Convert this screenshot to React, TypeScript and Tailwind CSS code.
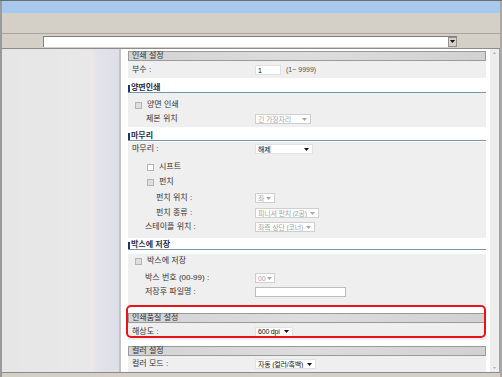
import type { ReactNode } from "react";

function Arrow({ muted }: { muted?: boolean }) {
  return (
    <svg width="5" height="3" viewBox="0 0 5 3" className="shrink-0">
      <path d="M0 0h5L2.5 3z" fill={muted ? "#a8a8a8" : "#111"} />
    </svg>
  );
}

function GrayHeader({ title }: { title: string }) {
  return (
    <div className="h-[10px] flex items-center pl-[3px] border border-[#9a9a9a] bg-gradient-to-r from-[#d3d3d3] via-[#dddddd] to-[#d1d1d1] text-[8px] leading-none text-[#333]">
      {title}
    </div>
  );
}

function BlueHeader({ title }: { title: string }) {
  return (
    <div className="h-[9px] flex items-start border-b border-[#7895a8]">
      <span className="w-[2px] h-[7px] bg-[#1d3563] mr-[1px] mt-[1px]" />
      <span className="text-[8px] leading-[8px] font-semibold text-[#1f2c48]">{title}</span>
    </div>
  );
}

function Row({ label, pad, className, children }: { label?: string; pad: string; className: string; children?: ReactNode }) {
  return (
    <div className={`flex items-center ${className}`}>
      <div className={`w-[127px] shrink-0 flex items-center text-[8px] leading-none text-[#333] ${pad}`}>{label}</div>
      {children}
    </div>
  );
}

function CheckRow({ label, pad, className, white }: { label: string; pad: string; className: string; white?: boolean }) {
  return (
    <div className={`flex items-center h-[14px] text-[8px] leading-none text-[#333] ${pad} ${className}`}>
      <span className={`w-[7px] h-[7px] border border-[#b4b4b4] mr-[5px] ${white ? "bg-white" : "bg-[#dedede]"}`} />
      {label}
    </div>
  );
}

function Select({ value, w, muted }: { value: string; w: string; muted?: boolean }) {
  return (
    <div
      className={`h-[10px] ${w} flex items-center justify-between gap-[2px] overflow-hidden pl-[2px] pr-[3px] bg-white border text-[7px] leading-none tracking-[-0.2px] ${
        muted ? "border-[#cfcfcf] text-[#a4a4a4]" : "border-[#e2e2e2] text-[#111]"
      }`}
    >
      <span className="whitespace-nowrap">{value}</span>
      <Arrow muted={muted} />
    </div>
  );
}

export default function App() {
  return (
    <div className="w-[502px] h-[377px] overflow-hidden flex flex-col bg-[#d4d0c8] border-t border-[#6e6e6e] font-['Liberation_Sans','Noto_Sans_CJK_KR',sans-serif]">
      <div className="flex-1 flex flex-col border-l-2 border-[#9a9a9a] border-r-2 border-r-[#a8a8a8]">
        {/* title bar */}
        <div className="h-[12px] bg-[#a7c9ee]" />
        {/* toolbar */}
        <div className="h-[21px] bg-[#d4d0c8] border-b border-[#aaa69e]" />
        {/* address row */}
        <div className="h-[15px] flex items-center pl-[41px] bg-[#d4d0c8] border-b border-[#8c8c8c]">
          <div className="w-[414px] h-[11px] flex justify-end bg-white border-t border-l border-[#808080]">
            <div className="w-[9px] h-[10px] flex items-center justify-center bg-[#d4d0c8] border border-[#909090]">
              <Arrow />
            </div>
          </div>
        </div>

        {/* main */}
        <div className="flex-1 flex min-h-0">
          <div className="w-[119px] shrink-0 bg-[linear-gradient(90deg,#e6e6e6_0%,#e8e8e8_72%,#ece8ea_77%,#e3e3ea_81%,#dedee8_100%)] border-r-2 border-[#c4c4c8]" />

          <div className="relative flex-1 bg-white pt-[2px] pl-[7px] pr-[4px]">
            <GrayHeader title="인쇄 설정" />
            <Row label="부수 :" pad="pl-[4px]" className="h-[17px] bg-[#efefef]">
              <div className="w-[26px] h-[10px] bg-white border border-[#e0e0e0] pl-[2px] text-[7px] leading-[9px] text-[#111]">1</div>
              <span className="ml-[5px] text-[7px] leading-none text-[#555]">(1~ 9999)</span>
            </Row>

            <div className="h-[6px]" />
            <BlueHeader title="양면인쇄" />
            <div className="h-[34px] bg-[#efefef] pt-[5px]">
              <CheckRow label="양면 인쇄" pad="pl-[7px]" className="" />
              <Row label="제본 위치" pad="pl-[18px]" className="h-[14px]">
                <Select value="긴 가장자리" w="w-[56px]" muted />
              </Row>
            </div>

            <div className="h-[5px]" />
            <BlueHeader title="마무리" />
            <div className="h-[96px] bg-[#efefef]">
              <Row label="마무리 :" pad="pl-[4px]" className="h-[14px] mt-[1px]">
                <Select value="해제" w="w-[58px]" />
              </Row>
              <CheckRow label="시프트" pad="pl-[19px]" className="mt-[4px]" white />
              <CheckRow label="펀치" pad="pl-[19px]" className="mt-[1px]" />
              <Row label="펀치 위치 :" pad="pl-[28px]" className="h-[14px] mt-[2px]">
                <Select value="좌" w="w-[20px]" muted />
              </Row>
              <Row label="펀치 종류 :" pad="pl-[28px]" className="h-[14px] mt-[1px]">
                <Select value="피니셔 펀치 (2공)" w="w-[64px]" muted />
              </Row>
              <Row label="스테이플 위치 :" pad="pl-[17px]" className="h-[14px]">
                <Select value="좌측 상단 (코너)" w="w-[60px]" muted />
              </Row>
            </div>

            <div className="h-[3px]" />
            <BlueHeader title="박스에 저장" />
            <div className="h-[53px] bg-[#efefef]">
              <CheckRow label="박스에 저장" pad="pl-[7px]" className="mt-[4px]" />
              <Row label="박스 번호 (00-99) :" pad="pl-[17px]" className="h-[14px] mt-[3px]">
                <Select value="00" w="w-[20px]" muted />
              </Row>
              <Row label="저장후 파일명 :" pad="pl-[17px]" className="h-[14px]">
                <div className="w-[91px] h-[10px] bg-white border border-[#bcbcbc]" />
              </Row>
            </div>

            <div className="h-[6px]" />
            <GrayHeader title="인쇄품질 설정" />
            <Row label="해상도 :" pad="pl-[4px]" className="h-[17px] bg-[#efefef]">
              <Select value="600 dpi" w="w-[38px]" />
            </Row>

            <div className="h-[6px]" />
            <GrayHeader title="컬러 설정" />
            <Row label="컬러 모드 :" pad="pl-[4px]" className="h-[16px] bg-[#efefef]">
              <Select value="자동 (컬러/흑백)" w="w-[61px]" />
            </Row>

            {/* highlight */}
            <div className="absolute left-[5px] top-[256px] w-[360px] h-[33px] border-2 border-[#e8141c] rounded-[5px]" />
          </div>

          {/* scrollbar */}
          <div className="w-[10px] shrink-0 bg-[#ededed] border-r border-[#a0a0a0] flex flex-col items-center justify-between py-[3px]">
            <svg width="3" height="2" viewBox="0 0 3 2"><path d="M0 2h3L1.5 0z" fill="#b0b0b0" /></svg>
            <svg width="3" height="2" viewBox="0 0 3 2"><path d="M0 0h3L1.5 2z" fill="#b0b0b0" /></svg>
          </div>
        </div>

        <div className="h-[6px] bg-[#d4d0c8] border-t border-[#8c8c8c]" />
      </div>
    </div>
  );
}
